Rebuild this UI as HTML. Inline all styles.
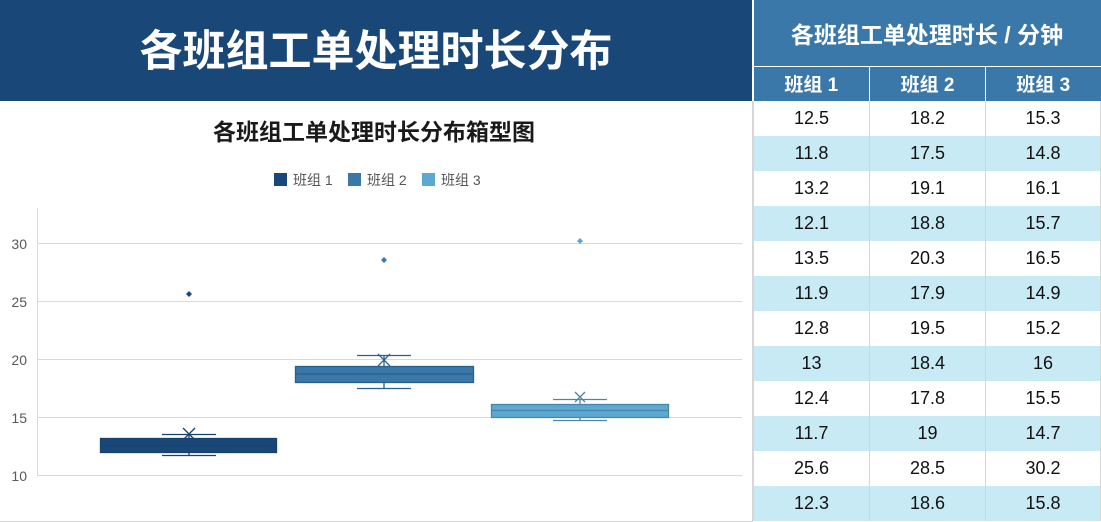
<!DOCTYPE html>
<html><head><meta charset="utf-8"><style>
*{margin:0;padding:0;box-sizing:border-box}
body{width:1101px;height:522px;overflow:hidden;background:#fff;font-family:"Liberation Sans","Noto Sans CJK SC",sans-serif;position:relative}
.title{position:absolute;left:0;top:0;width:752px;height:101px;background:#194777;color:#fff;font-size:43px;font-weight:bold;text-align:center;line-height:104px}
.left{position:absolute;left:0;top:101px;width:753px;height:421px;border-right:1px solid #d6d6d6;border-bottom:1px solid #d6d6d6}
table{position:absolute;left:753px;top:0;width:348px;border-collapse:collapse}
td{text-align:center;font-size:18px;color:#111;height:35px;border-left:1px solid #d6d6d6;border-right:1px solid #d6d6d6}
tr.h1 td{background:#3a78aa;color:#fff;font-weight:bold;font-size:23px;height:66px;border:none;border-bottom:1px solid #fff}
tr.h2 td{background:#3a78aa;color:#fff;font-weight:bold;font-size:19px;height:35px;border:none;border-left:1px solid #fff}
tr.h2 td:first-child{border-left:none}
tr.a td{background:#c8eaf4}
</style></head><body>
<div class="title">各班组工单处理时长分布</div>
<div class="left"></div>
<svg style="position:absolute;left:0;top:0" width="752" height="522" font-family="Liberation Sans, Noto Sans CJK SC, sans-serif">
<text x="374" y="140" text-anchor="middle" font-size="23" font-weight="bold" fill="#1a1a1a">各班组工单处理时长分布箱型图</text>
<rect x="274" y="173" width="13" height="13" fill="#194777"/><text x="293" y="185" font-size="14" fill="#555">班组 1</text>
<rect x="348" y="173" width="13" height="13" fill="#3a78aa"/><text x="367" y="185" font-size="14" fill="#555">班组 2</text>
<rect x="422" y="173" width="13" height="13" fill="#5ba8d2"/><text x="441" y="185" font-size="14" fill="#555">班组 3</text>
<g stroke="#d9d9d9" stroke-width="1">
<line x1="37" y1="243.5" x2="742" y2="243.5"/><line x1="37" y1="301.5" x2="742" y2="301.5"/><line x1="37" y1="359.5" x2="742" y2="359.5"/><line x1="37" y1="417.5" x2="742" y2="417.5"/><line x1="37" y1="475.5" x2="742" y2="475.5"/><line x1="37.5" y1="208" x2="37.5" y2="475"/></g>
<g font-size="14" fill="#595959" text-anchor="end"><text x="27" y="249">30</text><text x="27" y="307">25</text><text x="27" y="365">20</text><text x="27" y="423">15</text><text x="27" y="481">10</text></g>
<g stroke="#17426f" stroke-width="1.3" fill="none">
<line x1="162" y1="434.5" x2="216" y2="434.5"/><line x1="162" y1="455.5" x2="216" y2="455.5"/><line x1="189" y1="434" x2="189" y2="455"/>
<rect x="100.5" y="438.5" width="176" height="14" fill="#194777"/><line x1="100" y1="446" x2="276" y2="446"/>
<path d="M183 428l12 12M195 428l-12 12"/></g><path d="M189 291l3 3-3 3-3-3z" fill="#194777"/>
<g stroke="#2a5f8c" stroke-width="1.3" fill="none">
<line x1="357" y1="355.5" x2="411" y2="355.5"/><line x1="357" y1="388.5" x2="411" y2="388.5"/><line x1="384" y1="355" x2="384" y2="388"/>
<rect x="295.5" y="366.5" width="178" height="16" fill="#3a78aa"/><line x1="295" y1="374" x2="473" y2="374"/>
<path d="M378 354l12 12M390 354l-12 12"/></g><path d="M384 257l3 3-3 3-3-3z" fill="#3a78aa"/>
<g stroke="#4a86a8" stroke-width="1.3" fill="none">
<line x1="553" y1="399.5" x2="607" y2="399.5"/><line x1="553" y1="420.5" x2="607" y2="420.5"/><line x1="580" y1="399" x2="580" y2="420"/>
<rect x="491.5" y="404.5" width="177" height="13" fill="#5ba8d2"/><line x1="491" y1="410.5" x2="668" y2="410.5"/>
<path d="M575 392l10 10M585 392l-10 10"/></g><path d="M580 238l3 3-3 3-3-3z" fill="#5ba8d2"/>
</svg>
<table>
<tr class="h1"><td colspan="3">各班组工单处理时长 / 分钟</td></tr>
<tr class="h2"><td style="width:116px">班组 1</td><td style="width:116px">班组 2</td><td>班组 3</td></tr>
<tr><td>12.5</td><td>18.2</td><td>15.3</td></tr>
<tr class="a"><td>11.8</td><td>17.5</td><td>14.8</td></tr>
<tr><td>13.2</td><td>19.1</td><td>16.1</td></tr>
<tr class="a"><td>12.1</td><td>18.8</td><td>15.7</td></tr>
<tr><td>13.5</td><td>20.3</td><td>16.5</td></tr>
<tr class="a"><td>11.9</td><td>17.9</td><td>14.9</td></tr>
<tr><td>12.8</td><td>19.5</td><td>15.2</td></tr>
<tr class="a"><td>13</td><td>18.4</td><td>16</td></tr>
<tr><td>12.4</td><td>17.8</td><td>15.5</td></tr>
<tr class="a"><td>11.7</td><td>19</td><td>14.7</td></tr>
<tr><td>25.6</td><td>28.5</td><td>30.2</td></tr>
<tr class="a"><td>12.3</td><td>18.6</td><td>15.8</td></tr>
</table>
</body></html>
